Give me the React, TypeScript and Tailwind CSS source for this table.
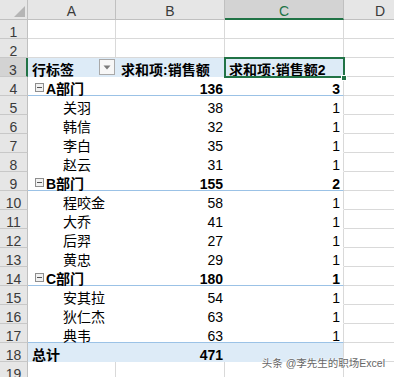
import React from "react";

type Row =
  | { n: number; type: "empty" }
  | { n: number; type: "head" }
  | { n: number; type: "group"; label: string; b: string; c: string; line?: boolean }
  | { n: number; type: "item"; label: string; b: string; c: string; line?: boolean }
  | { n: number; type: "total"; label: string; b: string };

const rows: Row[] = [
  { n: 1, type: "empty" },
  { n: 2, type: "empty" },
  { n: 3, type: "head" },
  { n: 4, type: "group", label: "A部门", b: "136", c: "3", line: true },
  { n: 5, type: "item", label: "关羽", b: "38", c: "1" },
  { n: 6, type: "item", label: "韩信", b: "32", c: "1" },
  { n: 7, type: "item", label: "李白", b: "35", c: "1" },
  { n: 8, type: "item", label: "赵云", b: "31", c: "1" },
  { n: 9, type: "group", label: "B部门", b: "155", c: "2", line: true },
  { n: 10, type: "item", label: "程咬金", b: "58", c: "1" },
  { n: 11, type: "item", label: "大乔", b: "41", c: "1" },
  { n: 12, type: "item", label: "后羿", b: "27", c: "1" },
  { n: 13, type: "item", label: "黄忠", b: "29", c: "1" },
  { n: 14, type: "group", label: "C部门", b: "180", c: "1", line: true },
  { n: 15, type: "item", label: "安其拉", b: "54", c: "1" },
  { n: 16, type: "item", label: "狄仁杰", b: "63", c: "1" },
  { n: 17, type: "item", label: "典韦", b: "63", c: "1", line: true },
  { n: 18, type: "total", label: "总计", b: "471" },
  { n: 19, type: "empty" },
];

const txt = "pt-[5px] leading-[15px] text-[14px]";

function RowHeader({ n }: { n: number }) {
  const sel = n === 3;
  return (
    <div
      className={
        "w-[28px] shrink-0 h-full border-b border-[#c8c8c8] text-center text-[#3a3a3a] " +
        txt +
        (sel
          ? " bg-[#d3d3d3] border-r-2 border-r-[#217346]"
          : " bg-[#e6e6e6] border-r border-r-[#c0c0c0]")
      }
    >
      {n}
    </div>
  );
}

function Collapse() {
  return (
    <span className="mt-[1px] ml-[3px] mr-[2px] w-[9px] h-[9px] shrink-0 border border-[#8e8e8e] bg-[#f2f2f2] flex items-center justify-center">
      <span className="w-[5px] h-[1px] bg-[#555]" />
    </span>
  );
}

function DCell({ last }: { last?: boolean }) {
  return <div className={"w-[72px] shrink-0 h-full border-b border-[#d9d9d9]" + (last ? "" : "")} />;
}

function SheetRow({ r }: { r: Row }) {
  if (r.type === "empty") {
    return (
      <div className="flex h-[19px]">
        <RowHeader n={r.n} />
        <div className="w-[88px] shrink-0 h-full border-r border-b border-[#d9d9d9]" />
        <div className="w-[109px] shrink-0 h-full border-r border-b border-[#d9d9d9]" />
        <div className="w-[119px] shrink-0 h-full border-r border-b border-[#d9d9d9]" />
        <DCell />
      </div>
    );
  }
  if (r.type === "head") {
    return (
      <div className="flex h-[19px]">
        <RowHeader n={r.n} />
        <div className={"w-[88px] shrink-0 h-full bg-[#ddebf7] border-b border-[#ddebf7] flex items-start pl-[4px] font-bold text-black " + txt}>
          <span>行标签</span>
          <span className="ml-auto mr-[1px] -mt-[4px] w-[16px] h-[16px] border border-[#a9a9a9] bg-[#f7f7f7] flex items-center justify-center">
            <svg width="8" height="5" viewBox="0 0 8 5">
              <path d="M0.5 0.5 L7.5 0.5 L4 4.5 Z" fill="#7a7a7a" />
            </svg>
          </span>
        </div>
        <div className={"w-[109px] shrink-0 h-full bg-[#ddebf7] border-b border-[#ddebf7] pl-[5px] font-bold text-black whitespace-nowrap " + txt}>
          求和项:销售额
        </div>
        <div className={"relative w-[119px] shrink-0 h-full bg-[#ddebf7] border-b border-[#ddebf7] border-r border-r-[#d9d9d9] pl-[4px] font-bold text-black whitespace-nowrap " + txt}>
          求和项:销售额2
          <div className="absolute -left-[1px] -top-[1px] w-[121px] h-[21px] border-2 border-[#217346]" />
          <div className="absolute -right-[4px] -bottom-[5px] w-[6px] h-[6px] bg-[#217346] border border-white" />
        </div>
        <DCell />
      </div>
    );
  }
  if (r.type === "total") {
    return (
      <div className="flex h-[19px]">
        <RowHeader n={r.n} />
        <div className={"w-[88px] shrink-0 h-full bg-[#ddebf7] border-b border-[#ddebf7] pl-[4px] font-bold text-black " + txt}>
          {r.label}
        </div>
        <div className={"w-[109px] shrink-0 h-full bg-[#ddebf7] border-b border-[#ddebf7] pr-[2px] text-right font-bold text-black " + txt}>
          {r.b}
        </div>
        <div className="w-[119px] shrink-0 h-full bg-[#ddebf7] border-b border-[#ddebf7] border-r border-r-[#d9d9d9]" />
        <DCell />
      </div>
    );
  }
  const bold = r.type === "group";
  const bottom = r.line ? " border-b border-[#9bc2e6]" : " border-b border-white";
  return (
    <div className="flex h-[19px]">
      <RowHeader n={r.n} />
      <div className={"w-[88px] shrink-0 h-full flex items-start text-black whitespace-nowrap " + txt + bottom + (bold ? " font-bold pl-[4px]" : " pl-[35px]")}>
        {bold && <Collapse />}
        <span>{r.label}</span>
      </div>
      <div className={"w-[109px] shrink-0 h-full text-right pr-[2px] text-black " + txt + bottom + (bold ? " font-bold" : "")}>
        {r.b}
      </div>
      <div className={"w-[119px] shrink-0 h-full text-right pr-[3px] text-black border-r border-r-[#d9d9d9] " + txt + bottom + (bold ? " font-bold" : "")}>
        {r.c}
      </div>
      <DCell />
    </div>
  );
}

export default function App() {
  return (
    <div className="relative w-[394px] h-[377px] overflow-hidden bg-white font-['Liberation_Sans','Noto_Sans_CJK_SC',sans-serif]">
      {/* column headers */}
      <div className="flex h-[20px]">
        <div className="w-[28px] shrink-0 h-full bg-[#e6e6e6] border-r border-b border-[#c0c0c0] flex items-end justify-end pr-[2px] pb-[2px]">
          <svg width="11" height="11" viewBox="0 0 11 11">
            <path d="M11 0 L11 11 L0 11 Z" fill="#b5b5b5" />
          </svg>
        </div>
        <div className={"w-[88px] shrink-0 h-full bg-[#e6e6e6] border-r border-b border-[#c0c0c0] text-center text-[#3a3a3a] " + "pt-[4px] leading-[15px] text-[14px]"}>A</div>
        <div className={"w-[109px] shrink-0 h-full bg-[#e6e6e6] border-r border-b border-[#c0c0c0] text-center text-[#3a3a3a] " + "pt-[4px] leading-[15px] text-[14px]"}>B</div>
        <div className={"w-[119px] shrink-0 h-full bg-[#d3d3d3] border-r border-r-[#c0c0c0] border-b-2 border-b-[#217346] text-center text-[#217346] " + "pt-[4px] leading-[15px] text-[14px]"}>C</div>
        <div className={"w-[72px] shrink-0 h-full bg-[#e6e6e6] border-b border-[#c0c0c0] text-center text-[#3a3a3a] " + "pt-[4px] leading-[15px] text-[14px]"}>D</div>
      </div>
      {rows.map((r) => (
        <SheetRow key={r.n} r={r} />
      ))}
      <div className="absolute right-[9px] bottom-[8px] text-[10.5px] leading-[12px] text-[#666] whitespace-nowrap [text-shadow:0_0_2px_#fff,0_0_2px_#fff]">
        头条 @李先生的职场Excel
      </div>
    </div>
  );
}
